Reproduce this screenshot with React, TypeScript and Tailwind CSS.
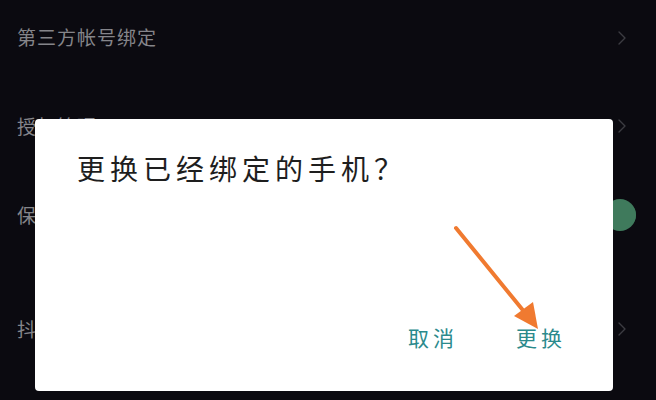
import { ChevronRight } from 'lucide-react'

const font = { fontFamily: '"Noto Sans CJK SC", "Noto Sans", sans-serif' }

function Row({ label, h, right }: { label: string; h: string; right: React.ReactNode }) {
  return (
    <div className={`flex items-center justify-between pl-[17px] pr-[22px] ${h}`}>
      <span className="text-[19px] text-[#85858a] tracking-[1px]">{label}</span>
      {right}
    </div>
  )
}

export default function App() {
  return (
    <div className="relative w-[656px] h-[400px] overflow-hidden bg-[#0b0a10]" style={font}>
      {/* settings list behind */}
      <div className="flex flex-col">
        <Row label="第三方帐号绑定" h="h-[75px]" right={<ChevronRight className="w-6 h-7 text-[#3c3c42]" strokeWidth={1.4} />} />
        <Row label="授权管理" h="h-[102px]" right={<ChevronRight className="w-6 h-7 text-[#3c3c42]" strokeWidth={1.4} />} />
        <Row
          label="保存登录信息"
          h="h-[76px]"
          right={
            <div className="flex items-center justify-end w-[56px] h-[26px] rounded-full bg-[#2c5a44] -mr-[2px]">
              <div className="w-[32px] h-[32px] rounded-full bg-[#3f7a5c]" />
            </div>
          }
        />
        <Row label="抖音号管理" h="h-[152px]" right={<ChevronRight className="w-6 h-7 text-[#3c3c42]" strokeWidth={1.4} />} />
      </div>

      {/* dialog */}
      <div className="absolute left-[35px] top-[119px] w-[578px] h-[272px] bg-white rounded-[4px] flex flex-col">
        <div className="pl-[42px] pt-[31px] text-[28px] text-[#1e1e1e] tracking-[5px] leading-[36px]">
          更换已经绑定的手机？
        </div>
        <div className="flex-1" />
        <div className="flex justify-end gap-[58px] pr-[47px] pb-[38px] text-[21px] text-[#2b8a8c] tracking-[4px]">
          <span>取消</span>
          <span>更换</span>
        </div>
      </div>

      {/* arrow annotation */}
      <svg className="absolute left-0 top-0 pointer-events-none" width="656" height="400">
        <line x1="456" y1="228" x2="526" y2="314" stroke="#f07a30" strokeWidth="4" strokeLinecap="round" />
        <polygon points="538,329 514,316 533,302" fill="#f07a30" />
      </svg>
    </div>
  )
}
